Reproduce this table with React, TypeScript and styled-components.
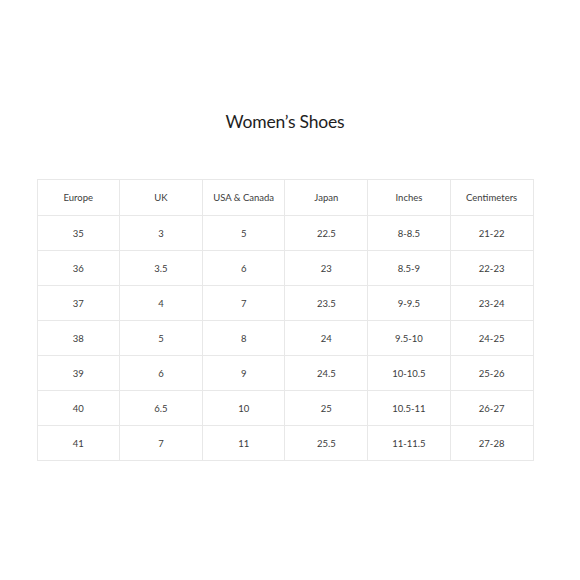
import styled, { createGlobalStyle } from 'styled-components';

const GlobalStyle = createGlobalStyle`
  html, body {
    margin: 0;
    padding: 0;
    background: #ffffff;
  }
  body {
    font-family: "Lato", "Liberation Sans", sans-serif;
  }
`;

const Page = styled.div`
  width: 580px;
  height: 580px;
  box-sizing: border-box;
  padding: 110px 10px 0 0;
  display: flex;
  flex-direction: column;
  align-items: center;
`;

const Title = styled.h1`
  margin: 0 0 45px;
  height: 24px;
  line-height: 24px;
  font-family: "Lato", "Liberation Sans", sans-serif;
  font-size: 17.5px;
  font-weight: 400;
  color: #1e1e1e;
  letter-spacing: -0.2px;
`;

const Table = styled.table`
  width: 497px;
  border-collapse: collapse;
  table-layout: fixed;
`;

const Cell = styled.td<{ $head?: boolean }>`
  height: ${({ $head }) => ($head ? 35 : 34)}px;
  padding: 0;
  border: 1px solid #e8e8e8;
  text-align: center;
  vertical-align: middle;
  font-family: "Lato", "Liberation Sans", sans-serif;
  font-size: 9.5px;
  color: #3c3c3c;
`;

const headers = ['Europe', 'UK', 'USA & Canada', 'Japan', 'Inches', 'Centimeters'];

const rows = [
  ['35', '3', '5', '22.5', '8-8.5', '21-22'],
  ['36', '3.5', '6', '23', '8.5-9', '22-23'],
  ['37', '4', '7', '23.5', '9-9.5', '23-24'],
  ['38', '5', '8', '24', '9.5-10', '24-25'],
  ['39', '6', '9', '24.5', '10-10.5', '25-26'],
  ['40', '6.5', '10', '25', '10.5-11', '26-27'],
  ['41', '7', '11', '25.5', '11-11.5', '27-28'],
];

const App = () => {
  return (
    <>
      <GlobalStyle />
      <Page>
        <Title>Women’s Shoes</Title>
        <Table>
          <tbody>
            <tr>
              {headers.map((h) => (
                <Cell key={h} $head>{h}</Cell>
              ))}
            </tr>
            {rows.map((row) => (
              <tr key={row[0]}>
                {row.map((v, i) => (
                  <Cell key={i}>{v}</Cell>
                ))}
              </tr>
            ))}
          </tbody>
        </Table>
      </Page>
    </>
  );
};

export default App;
